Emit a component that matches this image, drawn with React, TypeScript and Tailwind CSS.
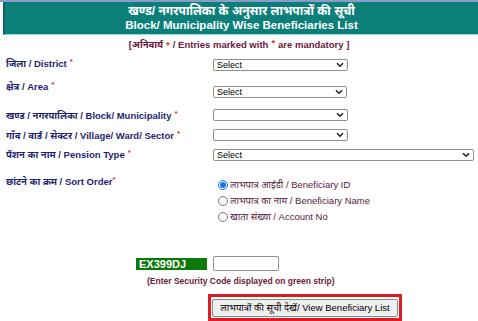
import React from "react";

const Star = () => <span className="text-[#e0302a] text-[8px] align-top ml-[3px] relative top-[-2px]">*</span>;

const Chevron = () => (
  <svg width="8" height="6" viewBox="0 0 8 6" className="shrink-0">
    <path d="M1 1.2 L4 4.2 L7 1.2" fill="none" stroke="#222" strokeWidth="1.6" />
  </svg>
);

const Sel = ({ text, w }: { text?: string; w: string }) => (
  <div className={`${w} h-[12px] flex items-center justify-between border border-[#8f8f8f] rounded-[2px] bg-white pl-[3px] pr-[3px] text-[9px] font-normal text-black leading-none`}>
    <span>{text ?? ""}</span>
    <Chevron />
  </div>
);

const Radio = ({ on, label }: { on?: boolean; label: string }) => (
  <div className="h-[16px] flex items-center">
    {on ? (
      <div className="w-[10px] h-[10px] rounded-full border border-[#1a73e8] bg-white flex items-center justify-center">
        <div className="w-[6px] h-[6px] rounded-full bg-[#1a73e8]" />
      </div>
    ) : (
      <div className="w-[10px] h-[10px] rounded-full border border-[#767676] bg-white" />
    )}
    <span className="ml-[2px] text-[9.5px] text-[#55203f]">{label}</span>
  </div>
);

export default function App() {
  return (
    <div className="w-[478px] h-[321px] bg-white overflow-hidden font-['Liberation_Sans','Noto_Sans',sans-serif]">
      <div className="h-[2px] bg-[#8a9cc8]" />
      <div className="ml-[3px] h-[33px] bg-[#0d7f79] border-l-2 border-[#0a6862] border-b border-b-[#8fe0d8] flex flex-col items-center justify-center text-white font-bold leading-none">
        <div className="text-[12px] leading-[13px]">खण्ड/ नगरपालिका के अनुसार लाभपात्रों की सूची</div>
        <div className="text-[11.5px] leading-[12px] mt-[1px]">Block/ Municipality Wise Beneficiaries List</div>
      </div>
      <div className="h-[20px] flex items-center justify-center text-[9.5px] font-bold text-[#6b1a3a]">
        [अनिवार्य <span className="text-[#e0302a] mx-[3px]">*</span> / Entries marked with <span className="text-[#e0302a] mx-[3px] relative top-[-2px]">*</span> are mandatory ]
      </div>
      <div className="text-[9.5px] font-bold text-[#1f1f72] leading-[12px]">
        <div className="h-[22px] flex">
          <div className="w-[213px] pl-[6px] pt-[3px]">जिला / District<Star /></div>
          <div className="mt-[4px]"><Sel text="Select" w="w-[135px]" /></div>
        </div>
        <div className="h-[26px] flex">
          <div className="w-[213px] pl-[6px] pt-[4px]">क्षेत्र / Area<Star /></div>
          <div className="mt-[9px]"><Sel text="Select" w="w-[134px]" /></div>
        </div>
        <div className="h-[20px] flex">
          <div className="w-[213px] pl-[6px] pt-[7px]">खण्ड / नगरपालिका / Block/ Municipality<Star /></div>
          <div className="mt-[6px]"><Sel w="w-[135px]" /></div>
        </div>
        <div className="h-[20px] flex">
          <div className="w-[213px] pl-[6px] pt-[7px]">गाँव / वार्ड / सेक्टर / Village/ Ward/ Sector<Star /></div>
          <div className="mt-[6px]"><Sel w="w-[135px]" /></div>
        </div>
        <div className="h-[22px] flex">
          <div className="w-[213px] pl-[6px] pt-[6px]">पेंशन का नाम / Pension Type<Star /></div>
          <div className="mt-[6px]"><Sel text="Select" w="w-[261px]" /></div>
        </div>
        <div className="h-[64px] flex">
          <div className="w-[218px] pl-[6px] pt-[11px]">छांटने का क्रम / Sort Order<span className="text-[#e0302a] text-[8px] relative top-[-3px]">*</span></div>
          <div className="mt-[12px] font-normal">
            <Radio on label="लाभपात्र आईडी / Beneficiary ID" />
            <Radio label="लाभपात्र का नाम / Beneficiary Name" />
            <Radio label="खाता संख्या / Account No" />
          </div>
        </div>
      </div>
      <div className="mt-[27px] h-[15px] flex items-center">
        <div className="ml-[136px] w-[71px] h-[12px] bg-[#0b7a0b] text-white font-bold text-[11px] leading-[12px] pl-[3px]">EX399DJ</div>
        <div className="ml-[6px] w-[66px] h-[15px] border border-[#8f8f8f] rounded-[2px] bg-white" />
      </div>
      <div className="mt-[4px] h-[12px] pl-[147px] text-[8.5px] font-bold text-[#6b1a3a] leading-[12px]">(Enter Security Code displayed on green strip)</div>
      <div className="mt-[7px] ml-[208px] w-[194px] h-[27px] border-[3px] border-[#e01b24] flex items-center justify-center bg-white">
        <div className="w-[186px] h-[18px] border border-[#8a8a8a] rounded-[2px] bg-[#efefef] flex items-center justify-center text-[9.5px] text-black leading-none">
          लाभपात्रों की सूची देखें/ View Beneficiary List
        </div>
      </div>
    </div>
  );
}
